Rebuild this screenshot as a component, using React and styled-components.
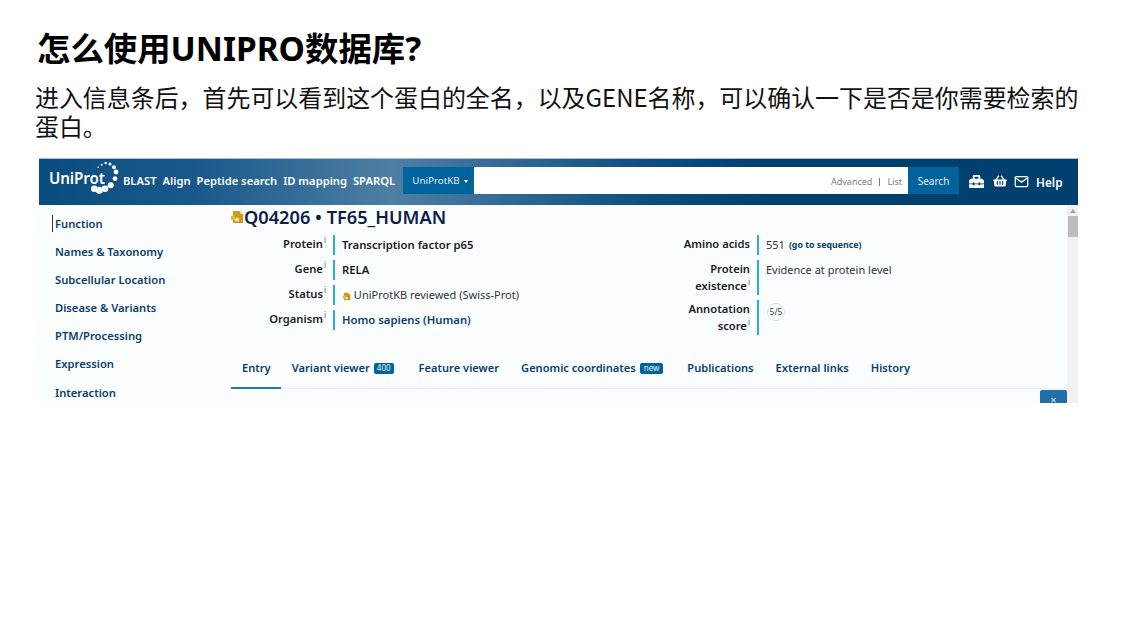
import React from "react";
import styled, { createGlobalStyle } from "styled-components";
import { FaToolbox, FaShoppingBasket } from "react-icons/fa";
import { FiMail } from "react-icons/fi";

const Global = createGlobalStyle`
  html, body { margin: 0; padding: 0; background: #fff; }
  * { box-sizing: border-box; }
`;

const Slide = styled.div`
  width: 1134px; height: 638px; overflow: hidden; background: #fff;
  padding: 25px 56px 0 36px;
  font-family: "Noto Sans", "Noto Sans CJK SC", sans-serif; color: #000;
`;
const Title = styled.h1`
  margin: 0 0 0 1px; font-size: 33.4px; line-height: 46px; font-weight: 700;
  font-family: "Noto Sans", "Noto Sans CJK SC", sans-serif;
`;
const Lead = styled.p`
  margin: 11px 0 0 -1px; font-size: 23.95px; line-height: 29px; font-weight: 400; color: #111;
  font-family: "Noto Sans CJK SC", sans-serif;
  width: 1050px;
`;
const Panel = styled.section`
  margin: 18px 0 0 3px; width: 1039px; height: 245px; overflow: hidden; background: #fbfeff;
  font-family: "Noto Sans", sans-serif; display: flex; flex-direction: column;
`;
const Header = styled.header`
  height: 47px; flex: none; display: flex; align-items: center; padding: 0 0 0 10px;
  background: linear-gradient(90deg, #0b4c7e 0%, #19588a 15%, #4f7fa3 34%, #0f4f80 58%, #00406f 70%, #00406f 100%);
  border-top: 1px solid #a9c2d3;
`;
const Logo = styled.div`
  position: relative; width: 74px; height: 40px; flex: none; color: #fff;
  font-size: 15.2px; font-weight: 600; line-height: 32px; letter-spacing: -.1px;
  svg { position: absolute; left: 0; top: 0; overflow: visible; }
`;
const NavLinks = styled.nav`
  display: flex; gap: 6px; width: 280px; flex: none; margin-top: -4px;
`;
const NavLink = styled.span`
  color: #fff; font-size: 11.2px; font-weight: 600; white-space: nowrap;
`;
const SearchGroup = styled.div`
  display: flex; height: 27px; margin-top: -3px; flex: none; width: 556px;
`;
const Scope = styled.div`
  width: 71px; background: #01639b; color: #e4eef5; font-size: 9.8px;
  display: flex; align-items: center; justify-content: center; gap: 4px; padding-left: 3px;
  &::after { content: ""; border: 2px solid transparent; border-top: 3px solid #fff; margin-top: 3px; }
`;
const SearchInput = styled.div`
  flex: 1; background: #fff; display: flex; align-items: center; justify-content: flex-end;
  gap: 7px; padding: 2px 6px 0 0; font-size: 9px; color: #7a7f88;
`;
const Divider = styled.span`
  width: 1px; height: 8px; background: #8a6f80;
`;
const SearchButton = styled.div`
  width: 51px; background: #01639b; color: #e4eef5; font-size: 10px;
  display: flex; align-items: center; justify-content: center;
`;
const Tools = styled.div`
  display: flex; align-items: center; margin: -2px 0 0 10px; color: #fff; font-size: 16px;
`;
const Tool = styled.span`
  display: flex; margin-right: ${p => p.$gap}px;
`;
const Help = styled.span`
  font-size: 11.8px; font-weight: 600; color: #fff; margin-top: 2px;
`;
const Body = styled.div`
  flex: 1; display: flex; min-height: 0;
`;
const Sidebar = styled.ul`
  list-style: none; margin: 0; padding: 10px 0 0 13px; width: 192px; flex: none;
`;
const SideItem = styled.li`
  height: 28.1px; line-height: 17px; font-size: 11.2px; font-weight: 600; color: #0b3d6b; white-space: nowrap;
  margin-left: ${p => (p.$active ? "0" : "3px")};
  span { display: inline-block; padding-left: ${p => (p.$active ? "2px" : "0")};
    border-left: ${p => (p.$active ? "1px solid #333" : "0")}; }
`;
const Main = styled.main`
  flex: 1; min-width: 0; position: relative;
`;
const EntryTitle = styled.h2`
  margin: 0; height: 24px; display: flex; align-items: center; gap: 0;
  font-size: 18.2px; font-weight: 600; color: #0c1f45; white-space: nowrap;
  svg { margin-left: -1px; }
`;
const Columns = styled.div`
  display: flex; margin-top: 6px;
`;
const InfoList = styled.dl`
  margin: 0; width: ${p => p.$width}px; flex: none; display: grid; grid-template-columns: 102px 1fr; row-gap: 5px; align-content: start;
`;
const Term = styled.dt`
  padding: 0 7px 1px 0; text-align: right; font-size: 11.2px; line-height: 17px; font-weight: 600; color: #1a1a1a;
  sup { font-size: 8px; font-weight: 400; line-height: 0; color: #555; margin-left: 1px; }
`;
const Value = styled.dd`
  margin: 0; min-height: 20px; border-left: 2px solid #2eaade; padding: 1px 0 0 7px;
  font-size: ${p => (p.$link || p.$strong ? 11.3 : 11)}px; line-height: 18px;
  color: ${p => (p.$link ? "#0b3d6b" : p.$strong ? "#1a1a1a" : "#333")};
  font-weight: ${p => (p.$link || p.$strong ? 600 : 400)};
  display: flex; align-items: flex-start; white-space: nowrap;
  svg { align-self: center; margin-top: 1px; }
`;
const SeqLink = styled.span`
  font-size: 8.8px; font-weight: 700; color: #0b3d6b; margin-left: 4px;
`;
const ScoreBadge = styled.span`
  width: 18px; height: 18px; border-radius: 50%; border: 1px solid #dcdfe3; margin: 2px 0 0 1px;
  font-size: 8.5px; color: #444; display: flex; align-items: center; justify-content: center;
`;
const Tabs = styled.div`
  position: absolute; left: 0; right: 0; top: 144px; height: 40px; display: flex; align-items: flex-start;
  border-bottom: 1px solid #e7edf0;
`;
const Tab = styled.div`
  height: 40px; padding: 9px ${p => (p.$active ? 10 : 11)}px 0 11px; margin-right: ${p => p.$gap || 0}px; font-size: 11.1px; line-height: 20px; font-weight: 600;
  color: #0b3d6b; white-space: nowrap; display: flex; align-items: flex-start; gap: 4px;
  border-bottom: 2px solid ${p => (p.$active ? "#2a77a8" : "transparent")};
`;
const TabBadge = styled.span`
  background: #01639b; color: #e6f0f6; font-size: 8px; line-height: 10px; height: 11px; padding: 0 ${p => p.$pad}px;
  border-radius: 2px; margin-top: 5px; font-weight: 400;
`;
const CloseButton = styled.div`
  position: absolute; right: 0; top: 185px; width: 27px; height: 20px; background: #1f70a6; color: #dfeaf2;
  font-size: 11px; line-height: 20px; text-align: center; border-radius: 2px 2px 0 0;
`;
const Scrollbar = styled.div`
  width: 11px; flex: none; background: #f1f1f1; display: flex; flex-direction: column; align-items: center;
`;
const ScrollArrow = styled.div`
  margin-top: 4px; border: 3px solid transparent; border-top: 0; border-bottom: 4px solid #a3a3a3;
`;
const ScrollThumb = styled.div`
  margin-top: 3px; width: 10px; height: 21px; background: #bdbdbd;
`;

const Reviewed = ({ size }) => (
  <svg width={size} height={size} viewBox="0 0 14 14">
    <path d="M3 1h7l3 3v9H3z" fill="#c99a1e" />
    <path d="M10 1l3 3h-3z" fill="#f1d98a" />
    <path d="M1 6l3-1 1 1v4H1z" fill="#e3b93a" />
    <path d="M7 7l1 1.6 1.7.2-1.2 1.2.3 1.7L7 11l-1.7.8.3-1.7-1.2-1.2 1.7-.2z" fill="#fff3c4" />
  </svg>
);

const dots = [
  [49.3, 5.3, 0.8], [52.7, 2.7, 1], [56.7, 1, 1.2], [61, 2, 1.5], [65, 5.3, 2], [67, 10, 2.4],
  [66, 16.7, 2.4], [61.7, 23.3, 3], [56, 26.7, 3.3], [50.3, 28.3, 3.5], [45.3, 26.7, 3.3]
];

const Logotype = () => (
  <Logo>
    <svg width="74" height="40" viewBox="0 0 74 40">
      {dots.map(([x, y, r], i) => <circle key={i} cx={x} cy={y} r={r} fill="#fff" />)}
    </svg>
    UniProt
  </Logo>
);

const I = () => <sup>i</sup>;

export default function App() {
  return (
    <Slide>
      <Global />
      <Title>怎么使用UNIPRO数据库?</Title>
      <Lead>进入信息条后，首先可以看到这个蛋白的全名，以及GENE名称，可以确认一下是否是你需要检索的蛋白。</Lead>
      <Panel>
        <Header>
          <Logotype />
          <NavLinks>
            <NavLink>BLAST</NavLink>
            <NavLink>Align</NavLink>
            <NavLink>Peptide search</NavLink>
            <NavLink>ID mapping</NavLink>
            <NavLink>SPARQL</NavLink>
          </NavLinks>
          <SearchGroup>
            <Scope>UniProtKB</Scope>
            <SearchInput>Advanced<Divider />List</SearchInput>
            <SearchButton>Search</SearchButton>
          </SearchGroup>
          <Tools>
            <Tool $gap={9}><FaToolbox size={15} /></Tool>
            <Tool $gap={7}><FaShoppingBasket size={14} /></Tool>
            <Tool $gap={7}><FiMail size={15} /></Tool>
            <Help>Help</Help>
          </Tools>
        </Header>
        <Body>
          <Sidebar>
            <SideItem $active><span>Function</span></SideItem>
            <SideItem><span>Names &amp; Taxonomy</span></SideItem>
            <SideItem><span>Subcellular Location</span></SideItem>
            <SideItem><span>Disease &amp; Variants</span></SideItem>
            <SideItem><span>PTM/Processing</span></SideItem>
            <SideItem><span>Expression</span></SideItem>
            <SideItem><span>Interaction</span></SideItem>
          </Sidebar>
          <Main>
            <EntryTitle><Reviewed size={14} />Q04206 • TF65_HUMAN</EntryTitle>
            <Columns>
              <InfoList $width={424}>
                <Term>Protein<I /></Term>
                <Value $strong>Transcription factor p65</Value>
                <Term>Gene<I /></Term>
                <Value $strong>RELA</Value>
                <Term>Status<I /></Term>
                <Value><Reviewed size={9} />&nbsp;UniProtKB reviewed (Swiss-Prot)</Value>
                <Term>Organism<I /></Term>
                <Value $link>Homo sapiens (Human)</Value>
              </InfoList>
              <InfoList $width={400}>
                <Term>Amino acids</Term>
                <Value>551<SeqLink>(go to sequence)</SeqLink></Value>
                <Term>Protein existence<I /></Term>
                <Value>Evidence at protein level</Value>
                <Term>Annotation score<I /></Term>
                <Value><ScoreBadge>5/5</ScoreBadge></Value>
              </InfoList>
            </Columns>
            <Tabs>
              <Tab $active>Entry</Tab>
              <Tab $gap={3}>Variant viewer<TabBadge $pad={3}>400</TabBadge></Tab>
              <Tab>Feature viewer</Tab>
              <Tab $gap={2}>Genomic coordinates<TabBadge $pad={4}>new</TabBadge></Tab>
              <Tab>Publications</Tab>
              <Tab>External links</Tab>
              <Tab>History</Tab>
            </Tabs>
            <CloseButton>×</CloseButton>
          </Main>
          <Scrollbar>
            <ScrollArrow />
            <ScrollThumb />
          </Scrollbar>
        </Body>
      </Panel>
    </Slide>
  );
}
